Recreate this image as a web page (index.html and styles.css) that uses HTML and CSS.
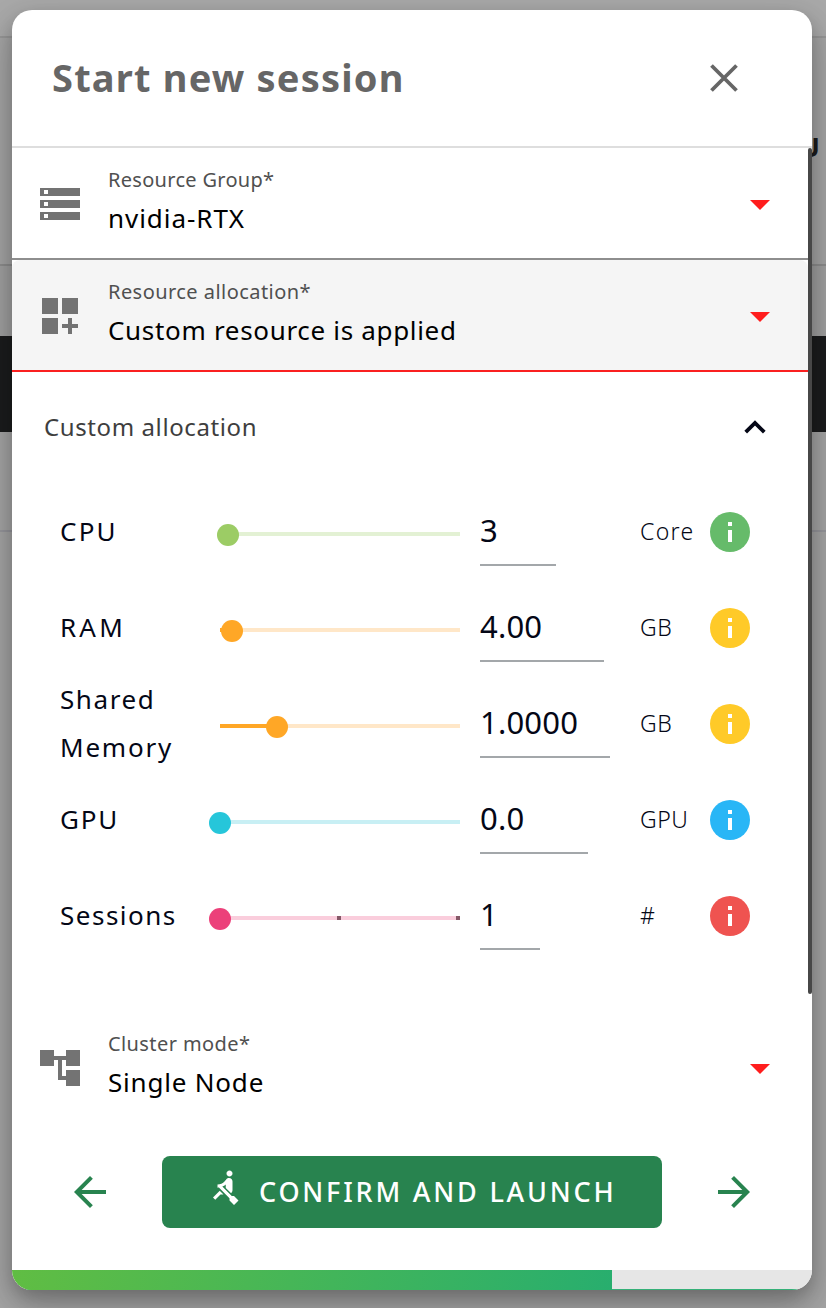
FILE: index.html
```html
<!DOCTYPE html>
<html lang="en">
<head>
<meta charset="utf-8">
<title>Start new session</title>
<link rel="stylesheet" href="styles.css">
</head>
<body>
<div class="page">
  <div class="backdrop" aria-hidden="true">
    <div class="bg-top"></div>
    <div class="bg-head"><span class="bg-letter">U</span></div>
    <div class="bg-tabs"></div>
    <div class="bg-band"></div>
    <div class="bg-row"></div>
  </div>
  <main class="dialog">
    <header class="dialog-header">
      <h1 class="title"><span class="t-title">Start new session</span></h1>
      <svg class="close" width="28" height="28" viewBox="0 0 28 28"><path d="M1.500 1.500 26.500 26.500M26.500 1.500 1.500 26.500" stroke="#666" stroke-width="3.800" fill="none"/></svg>
    </header>
    <div class="content">
      <div class="select">
        <svg class="select-icon" width="48" height="48" viewBox="0 0 24 24" fill="#737373"><path d="M2 20h20v-4H2v4zm2-3h2v2H4v-2zM2 4v4h20V4H2zm4 3H4V5h2v2zm-4 7h20v-4H2v4zm2-3h2v2H4v-2z"/></svg>
        <div class="select-text"><div class="label t-rg">Resource Group*</div><div class="value t-nv">nvidia-RTX</div></div>
        <svg class="arrow" width="20" height="10" viewBox="0 0 20 10"><path d="M0 0h20L10 10z" fill="#ff1d1d"/></svg>
      </div>
      <div class="select select-active">
        <svg class="select-icon" width="48" height="48" viewBox="0 0 24 24" fill="#737373"><path d="M3 3h8v8H3zM13 3h8v8h-8zM3 13h8v8H3zM18 13h-2v3h-3v2h3v3h2v-3h3v-2h-3z"/></svg>
        <div class="select-text"><div class="label t-ra">Resource allocation*</div><div class="value t-cr">Custom resource is applied</div></div>
        <svg class="arrow" width="20" height="10" viewBox="0 0 20 10"><path d="M0 0h20L10 10z" fill="#ff1d1d"/></svg>
      </div>
      <div class="expander">
        <span class="t-ca">Custom allocation</span>
        <svg width="22" height="14" viewBox="0 0 22 14"><path d="M1.700 12.200 11 3l9.300 9.200" stroke="#040716" stroke-width="3.800" fill="none"/></svg>
      </div>
      <div class="resources">
        <div class="resource green">
          <div class="name"><span class="t-cpu">CPU</span></div>
          <div class="slider"><div class="track"></div><div class="knob" style="left:7.500px"></div></div>
          <div class="field w-cpu"><span>3</span></div>
          <div class="unit"><span class="t-core">Core</span></div>
          <svg class="info" width="40" height="40" viewBox="0 0 40 40"><circle cx="20" cy="20" r="20"/><path d="M18 10h4v4h-4zM18 18h4v12h-4z" fill="#fff"/></svg>
        </div>
        <div class="resource orange">
          <div class="name"><span class="t-ram">RAM</span></div>
          <div class="slider"><div class="track"><div class="fill" style="width:11.500px"></div></div><div class="knob" style="left:11.500px"></div></div>
          <div class="field w-ram"><span>4.00</span></div>
          <div class="unit"><span class="t-gb">GB</span></div>
          <svg class="info" width="40" height="40" viewBox="0 0 40 40"><circle cx="20" cy="20" r="20"/><path d="M18 10h4v4h-4zM18 18h4v12h-4z" fill="#fff"/></svg>
        </div>
        <div class="resource orange">
          <div class="name"><span class="t-sh">Shared</span><br><span class="t-me">Memory</span></div>
          <div class="slider"><div class="track"><div class="fill" style="width:57px"></div></div><div class="knob" style="left:57px"></div></div>
          <div class="field w-shm"><span>1.0000</span></div>
          <div class="unit"><span class="t-gb">GB</span></div>
          <svg class="info" width="40" height="40" viewBox="0 0 40 40"><circle cx="20" cy="20" r="20"/><path d="M18 10h4v4h-4zM18 18h4v12h-4z" fill="#fff"/></svg>
        </div>
        <div class="resource cyan">
          <div class="name"><span class="t-gpu">GPU</span></div>
          <div class="slider"><div class="track"></div><div class="knob" style="left:0px"></div></div>
          <div class="field w-gpu"><span>0.0</span></div>
          <div class="unit"><span class="t-ugpu">GPU</span></div>
          <svg class="info" width="40" height="40" viewBox="0 0 40 40"><circle cx="20" cy="20" r="20"/><path d="M18 10h4v4h-4zM18 18h4v12h-4z" fill="#fff"/></svg>
        </div>
        <div class="resource pink">
          <div class="name"><span class="t-se">Sessions</span></div>
          <div class="slider"><div class="track ticks"><i></i><i></i></div><div class="knob" style="left:0px"></div></div>
          <div class="field w-ses"><span>1</span></div>
          <div class="unit"><span>#</span></div>
          <svg class="info" width="40" height="40" viewBox="0 0 40 40"><circle cx="20" cy="20" r="20"/><path d="M18 10h4v4h-4zM18 18h4v12h-4z" fill="#fff"/></svg>
        </div>
      </div>
      <div class="select select-plain">
        <svg class="select-icon" width="48" height="48" viewBox="0 0 24 24" fill="#737373"><path d="M22 11V3h-7v3H9V3H2v8h7V8h2v10h4v3h7v-8h-7v3h-2V8h2v3z"/></svg>
        <div class="select-text"><div class="label t-cm">Cluster mode*</div><div class="value t-sn">Single Node</div></div>
        <svg class="arrow" width="20" height="10" viewBox="0 0 20 10"><path d="M0 0h20L10 10z" fill="#ff1d1d"/></svg>
      </div>
      <div class="scrollbar"></div>
    </div>
    <footer class="footer">
      <svg width="32" height="32" viewBox="0 0 16 16"><path d="M16 7H3.830l5.590-5.590L8 0 0 8l8 8 1.410-1.410L3.830 9H16z" fill="#28834f"/></svg>
      <button class="launch">
        <svg class="rower" width="36" height="36" viewBox="0 0 24 24" fill="#fff"><path d="M8.500 14.500 4 19l1.500 1.500L9 17h2l-2.500-2.500zM15 1c-1.100 0-2 .9-2 2s.9 2 2 2 2-.9 2-2-.9-2-2-2zm6 20.010L18 24l-2.990-3.010V19.500l-7.100-7.090c-.31.050-.61.070-.91.070v-2.160c1.660.030 3.610-.87 4.670-2.040l1.400-1.550c.19-.21.430-.38.690-.5.290-.14.620-.23.960-.23h.03C15.990 6.010 17 7.020 17 8.260v5.750c0 .84-.35 1.610-.92 2.160l-3.580-3.580v-2.270c-.63.520-1.430 1.020-2.290 1.390L16.500 18H18l3 3.010z"/></svg>
        <span class="t-go">CONFIRM AND LAUNCH</span>
      </button>
      <svg width="32" height="32" viewBox="0 0 16 16"><path d="M8 0 6.590 1.410 12.170 7H0v2h12.170l-5.580 5.590L8 16l8-8z" fill="#28834f"/></svg>
    </footer>
    <div class="progress"><div class="progress-bar" style="width:75%"></div></div>
  </main>
</div>
</body>
</html>
```
FILE: styles.css
```css
* { box-sizing: border-box; }
body { margin: 0; font-family: "Noto Sans", "Open Sans", sans-serif; background: #a6a6a6; }
.page { position: relative; width: 826px; height: 1308px; padding: 10px 14px 18px 12px; overflow: hidden; }
.backdrop { position: absolute; inset: 0; display: flex; flex-direction: column; background: #a4a4a4; }
.bg-top { height: 38px; border-bottom: 2px solid #969696; background: #a8a8a8; }
.bg-head { height: 228px; border-bottom: 2px solid #8d8d8d; display: flex; justify-content: flex-end; align-items: flex-start; }
.bg-letter { font-size: 27px; font-weight: 700; line-height: 40px; color: #1b1b1b; margin: 89px 6px 0 0; }
.bg-tabs { height: 70px; background: #a0a0a0; }
.bg-band { height: 96px; background: #1b1c1d; }
.bg-row { height: 100px; border-bottom: 2px solid #95959b; }
.dialog { position: relative; width: 800px; height: 1280px; display: flex; flex-direction: column; background: #fff; border-radius: 20px; box-shadow: 0 8px 20px rgba(0,0,0,.25), 0 20px 44px rgba(0,0,0,.16); overflow: hidden; }
.dialog-header { height: 138px; flex: none; display: flex; align-items: center; justify-content: space-between; padding: 0 74px 0 40px; border-bottom: 2px solid #dedede; }
.title { margin: -2px 0 0; font-size: 38px; line-height: 60px; color: #666; font-weight: 700; white-space: nowrap; }
.content { position: relative; height: 976px; flex: none; }
.select { width: 796px; height: 112px; display: flex; align-items: center; padding: 0 38px 0 24px; border-bottom: 2px solid #8e8e8e; }
.select-active { background: #f5f5f5; border-bottom-color: #fa2020; border-radius: 8px 8px 0 0; }
.select-active { border-bottom-left-radius: 0; }
.select-plain { border-bottom-color: transparent; }
.select-text { flex: 1; margin-left: 24px; height: 90px; padding-top: 5px; white-space: nowrap; }
.select-icon { margin-top: 2px; flex: none; }
.arrow { margin-top: 3px; }
.label { font-size: 20px; line-height: 34px; color: #505050; }
.value { font-size: 26px; line-height: 42px; color: #000; }
.expander { height: 112px; display: flex; align-items: center; justify-content: space-between; padding: 0 46px 3px 32px; color: #3e3e3e; font-size: 24px; white-space: nowrap; }
.resources { padding: 0 62px 48px 48px; color: #040716; }
.resource { height: 96px; display: flex; align-items: center; }
.name { width: 160px; margin-top: -2px; font-size: 26px; line-height: 48px; white-space: nowrap; }
.slider { position: relative; width: 240px; height: 24px; padding-top: 12px; }
.track { height: 4px; }
.fill { height: 4px; background: currentColor; }
.ticks { display: flex; justify-content: space-between; padding-left: 117px; }
.ticks i { width: 4px; height: 4px; background: #855867; }
.knob { position: absolute; top: 4px; width: 22px; height: 22px; margin-left: -11px; border-radius: 50%; background: currentColor; }
.green .slider { color: #9ccc65; } .green .track { background: #e3f1d4; } .green .info { fill: #66bb6a; }
.orange .slider { color: #ffa726; } .orange .track { background: #ffe7c8; } .orange .info { fill: #ffca28; }
.cyan .slider { color: #26c6da; } .cyan .track { background: #c8eff4; } .cyan .info { fill: #29b6f6; }
.pink .slider { color: #ec407a; } .pink .track { background: #facddc; } .pink .info { fill: #ef5350; }
.field { height: 68px; margin-left: 20px; font-size: 31px; line-height: 65px; letter-spacing: .2px; border-bottom: 2px solid #a3a7aa; white-space: nowrap; }
.w-cpu { width: 76px; margin-right: 84px; }
.w-ram { width: 124px; margin-right: 36px; }
.w-shm { width: 130px; margin-right: 30px; }
.w-gpu { width: 108px; margin-right: 52px; }
.w-ses { width: 60px; margin-right: 100px; }
.unit { width: 70px; margin-top: -2px; font-size: 23px; font-weight: 300; white-space: nowrap; }
.info { flex: none; }
.scrollbar { position: absolute; right: 0; top: 0; width: 4px; height: 846px; background: #474747; border-radius: 2px; }
.footer { height: 146px; flex: none; display: flex; align-items: flex-start; justify-content: space-between; padding: 32px 62px 0; }
.footer > svg { margin-top: 20px; }
.launch { display: flex; align-items: center; width: 500px; height: 72px; padding: 0 0 2px 45px; border: 0; border-radius: 8px; background: #28834f; color: #fff; font: 500 27px "Noto Sans", sans-serif; white-space: nowrap; }
.rower { margin: -9px 16px 0 0; }
.progress { height: 20px; flex: none; background: #e6e6e6; border-bottom: 1px solid #35b078; }
.progress-bar { height: 20px; background: linear-gradient(100deg, #60bd43, #28ae6e); }
.t-title { letter-spacing: 1.2px; }
.t-rg { letter-spacing: .3px; }
.t-nv { letter-spacing: .95px; }
.t-ra { letter-spacing: .45px; }
.t-cr { letter-spacing: .68px; }
.t-ca { letter-spacing: .6px; }
.t-cpu { letter-spacing: 2.2px; }
.t-ram { letter-spacing: 3.2px; }
.t-sh { letter-spacing: 1.6px; }
.t-me { letter-spacing: 1.8px; }
.t-gpu { letter-spacing: 1.8px; }
.t-se { letter-spacing: 1.5px; }
.t-core { letter-spacing: 1.3px; }
.t-gb, .t-ugpu { letter-spacing: .5px; }
.t-cm { letter-spacing: .4px; }
.t-sn { letter-spacing: .8px; }
.t-go { letter-spacing: 2.8px; }
```
